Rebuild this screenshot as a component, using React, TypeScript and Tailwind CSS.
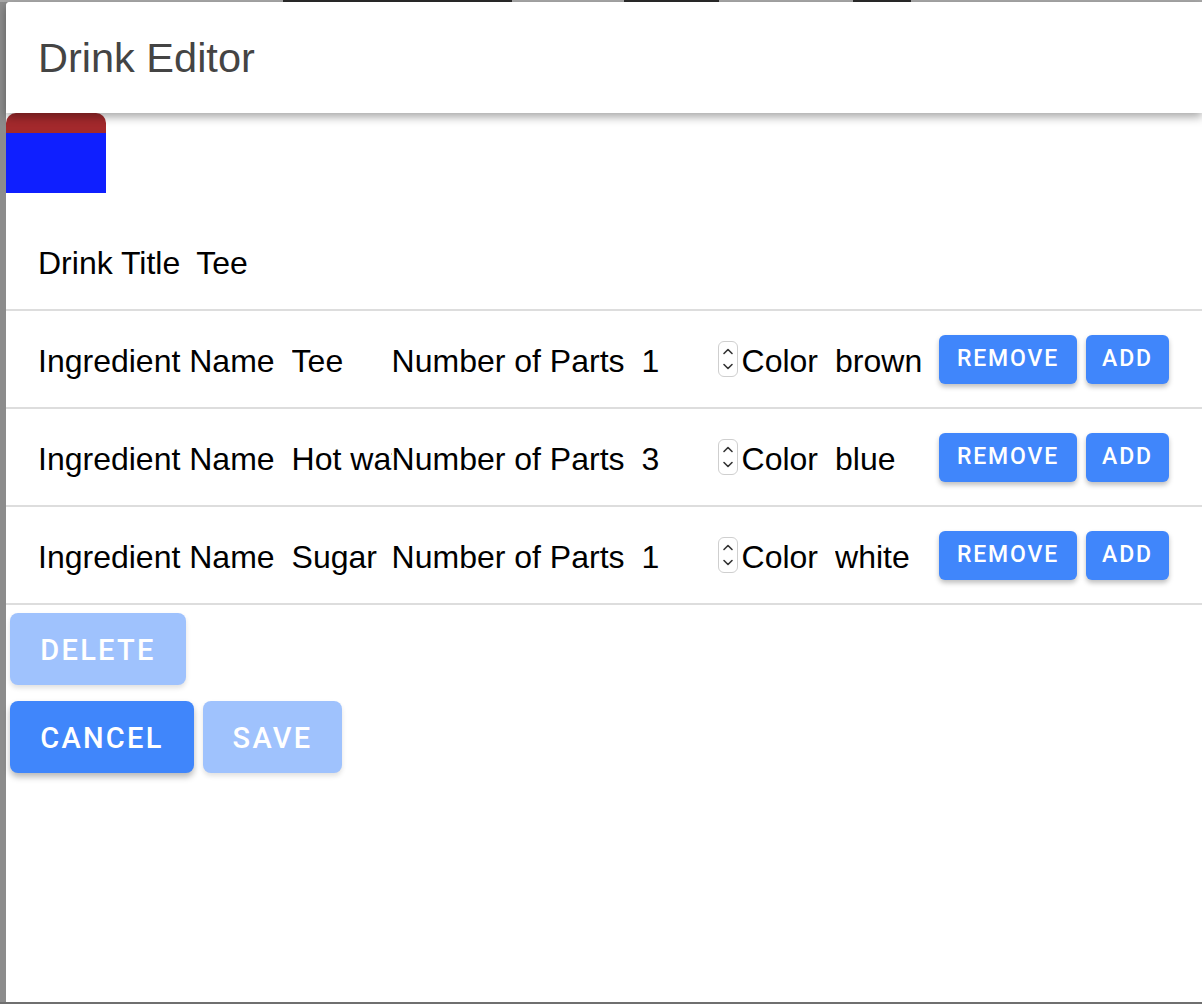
import React from 'react'

const ingredients = [
  { name: 'Tee', parts: '1', color: 'brown' },
  { name: 'Hot water', parts: '3', color: 'blue' },
  { name: 'Sugar', parts: '1', color: 'white' },
]

const body = { fontFamily: '"Liberation Sans", Arial, sans-serif' }
const btn = { fontFamily: 'Roboto, "Liberation Sans", sans-serif' }

function Spinner() {
  return (
    <span className="flex h-[36px] w-[20px] flex-col items-center justify-between rounded-[6px] border border-[#cfcfcf] bg-white py-[5px]">
      <svg width="12" height="8" viewBox="0 0 12 8" fill="none">
        <path d="M2 6.5 6 2.5 10 6.5" stroke="#333" strokeWidth="1.6" strokeLinecap="round" strokeLinejoin="round" />
      </svg>
      <svg width="12" height="8" viewBox="0 0 12 8" fill="none">
        <path d="M2 1.5 6 5.5 10 1.5" stroke="#333" strokeWidth="1.6" strokeLinecap="round" strokeLinejoin="round" />
      </svg>
    </span>
  )
}

function SmallButton({ label, width }: { label: string; width: string }) {
  return (
    <button
      style={btn}
      className={`${width} h-[49px] rounded-[6px] bg-[#4086fb] pt-[1px] text-[23px] font-medium uppercase tracking-[0.08em] text-white shadow-[0_3px_5px_rgba(0,0,0,0.25)]`}
    >
      {label}
    </button>
  )
}

export default function App() {
  return (
    <div className="flex h-[1004px] w-[1202px] flex-col overflow-hidden bg-[#8c8c8c]">
      <div className="relative h-[2px] bg-[#a8a8a8]">
        <div className="absolute left-[283px] top-0 h-[2px] w-[229px] bg-[#2a2a2a]" />
        <div className="absolute left-[624px] top-0 h-[2px] w-[95px] bg-[#2a2a2a]" />
        <div className="absolute left-[853px] top-0 h-[2px] w-[58px] bg-[#2a2a2a]" />
      </div>

      <div className="ml-[6px] flex h-[1000px] flex-col rounded-tl-[4px] bg-white" style={body}>
        <header className="relative z-10 flex h-[111px] items-center rounded-tl-[4px] bg-white pl-[32px] pt-[2px] shadow-[0_4px_10px_rgba(0,0,0,0.35)]">
          <h1 className="text-[41.5px] text-[#444]">Drink Editor</h1>
        </header>

        <div className="flex h-[100px] w-[100px] flex-col overflow-hidden rounded-[10px]">
          <div className="h-[20px] bg-[#a3292c]" />
          <div className="h-[60px] bg-[#0f1fff]" />
          <div className="h-[20px] bg-white" />
        </div>

        <div className="flex h-[98px] items-center border-b-2 border-[#dddddd] pl-[32px] text-[32px] text-black">
          <span className="mr-[16px] mt-[4px]">Drink Title</span>
          <input readOnly value="Tee" className="mt-[4px] w-[100px] bg-transparent p-0 outline-none" />
        </div>

        {ingredients.map((ing) => (
          <div key={ing.color} className="flex h-[98px] items-center border-b-2 border-[#dddddd] pl-[32px] text-[32px] text-black">
            <span className="mr-[17px] mt-[4px]">Ingredient Name</span>
            <input readOnly value={ing.name} className="mt-[4px] w-[100px] bg-transparent p-0 outline-none" />
            <span className="mr-[17px] mt-[4px]">Number of Parts</span>
            <input readOnly value={ing.parts} className="mt-[4px] w-[76px] bg-transparent p-0 outline-none" />
            <Spinner />
            <span className="ml-[4px] mr-[17px] mt-[4px]">Color</span>
            <input readOnly value={ing.color} className="mt-[4px] w-[95px] bg-transparent p-0 outline-none" />
            <div className="ml-[9px] flex gap-[9px]">
              <SmallButton label="Remove" width="w-[138px]" />
              <SmallButton label="Add" width="w-[83px]" />
            </div>
          </div>
        ))}

        <div className="flex flex-col gap-[16px] pl-[4px] pt-[8px]">
          <div>
            <button
              style={btn}
              className="h-[72px] w-[176px] rounded-[8px] bg-[#9fc2fd] pt-[3px] text-[29px] font-medium uppercase tracking-[0.08em] text-white shadow-[0_3px_5px_rgba(0,0,0,0.12)]"
            >
              Delete
            </button>
          </div>
          <div className="flex gap-[9px]">
            <button
              style={btn}
              className="h-[72px] w-[184px] rounded-[8px] bg-[#4086fb] pt-[3px] text-[29px] font-medium uppercase tracking-[0.08em] text-white shadow-[0_4px_6px_rgba(0,0,0,0.28)]"
            >
              Cancel
            </button>
            <button
              style={btn}
              className="h-[72px] w-[139px] rounded-[8px] bg-[#9fc2fd] pt-[3px] text-[29px] font-medium uppercase tracking-[0.08em] text-white shadow-[0_3px_5px_rgba(0,0,0,0.12)]"
            >
              Save
            </button>
          </div>
        </div>
      </div>

      <div className="h-[2px] bg-[#6f6f6f]" />
    </div>
  )
}
